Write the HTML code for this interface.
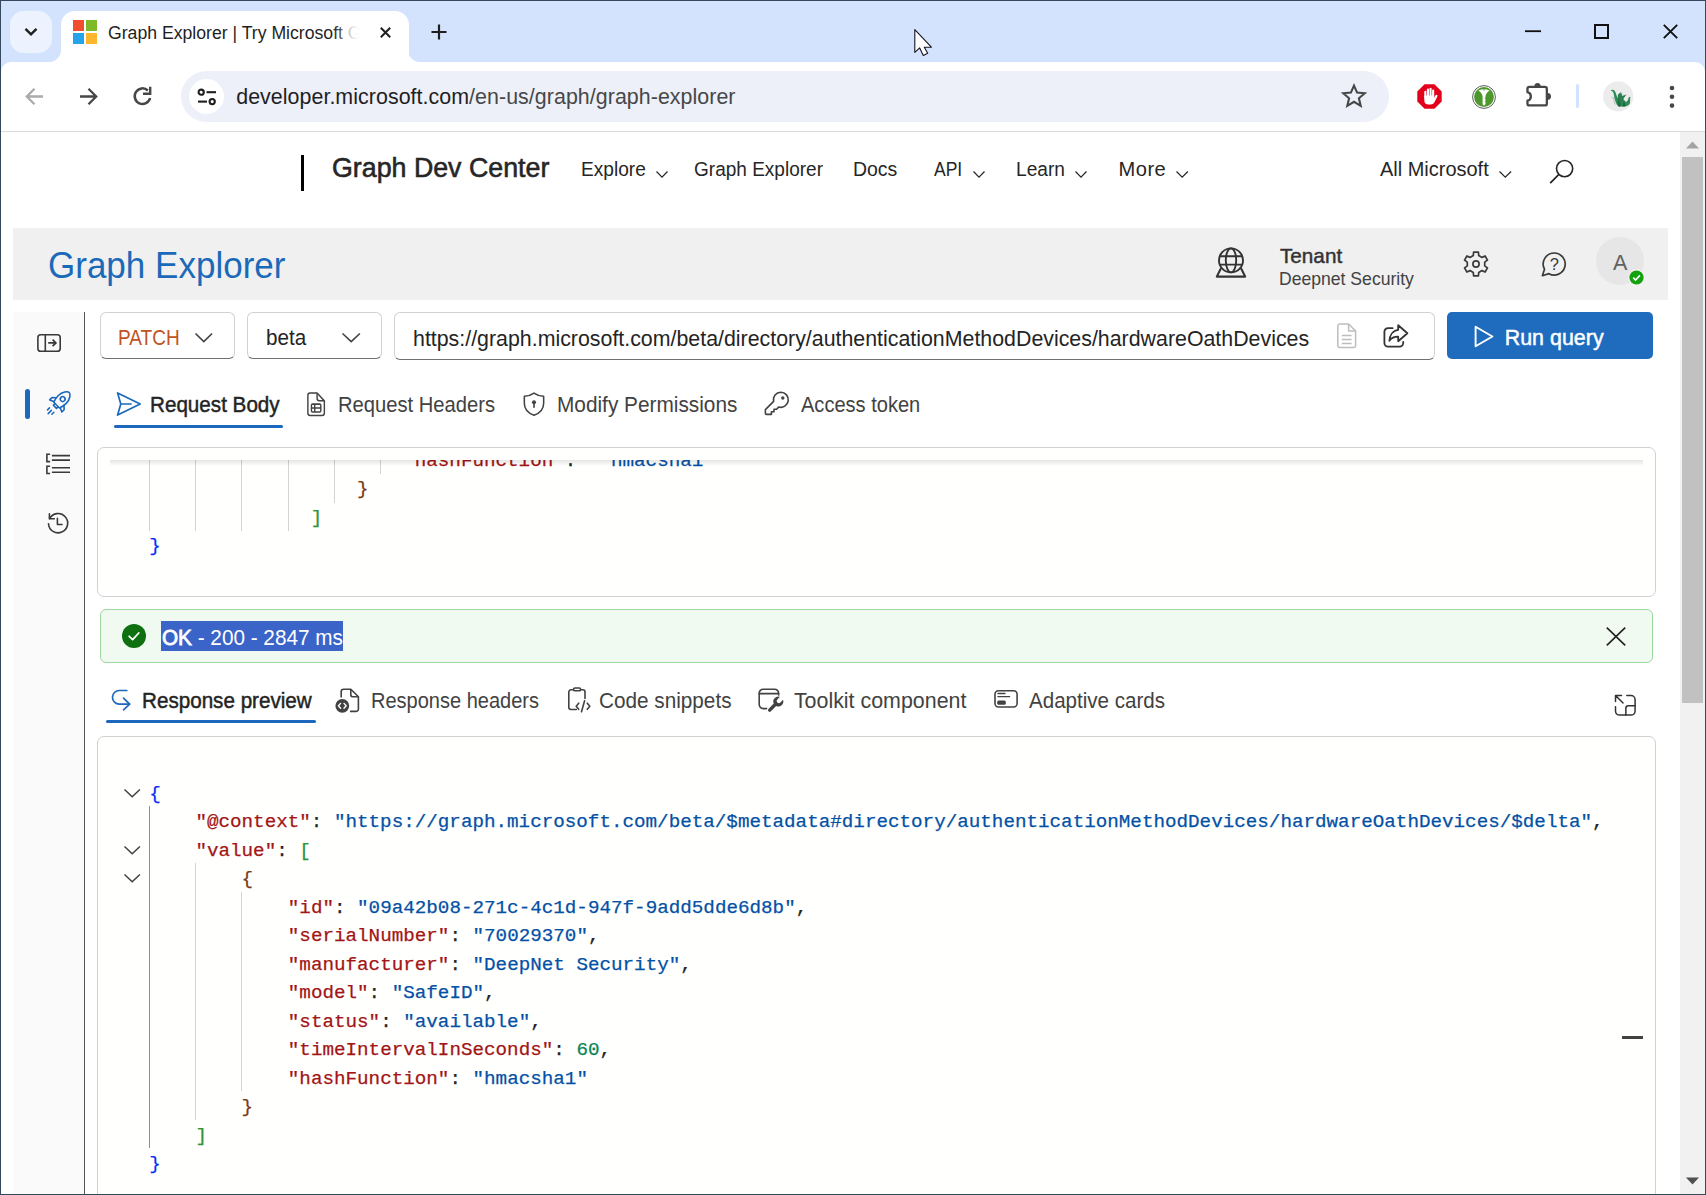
<!DOCTYPE html>
<html lang="en">
<head>
<meta charset="utf-8">
<title>Graph Explorer | Try Microsoft Graph APIs</title>
<style>
*{box-sizing:border-box;margin:0;padding:0}
html,body{width:1706px;height:1195px;overflow:hidden;background:#fff}
body{position:relative;font-family:"Liberation Sans",Arial,sans-serif;color:#242424}
.abs{position:absolute}
.t{position:absolute;white-space:nowrap;line-height:1}
svg{position:absolute;overflow:visible}
/* chrome */
#tabstrip{left:0;top:0;width:1706px;height:90px;background:#d3e3fd}
#tabsearch{left:10px;top:11px;width:42px;height:42px;border-radius:14px;background:#ecf3fe}
#tab{left:61px;top:10.500px;width:347.500px;height:51.500px;background:#fff;border-radius:14px 14px 0 0}
#toolbar{left:1px;top:62px;width:1704px;height:69px;background:#fff;border-radius:10px 10px 0 0}
#omni{left:181px;top:71px;width:1208px;height:51px;border-radius:26px;background:#edf0f9}
#omnichip{left:189px;top:79px;width:35px;height:35px;border-radius:18px;background:#fff}
#sep{left:1px;top:131px;width:1705px;height:1px;background:#dadce0}
/* page */
#page{left:1px;top:132px;width:1681px;height:1062px;background:#fff}
#vscroll{left:1680px;top:132px;width:25px;height:1062px;background:#f1f1f1}
#vthumb{left:1682px;top:157px;width:21px;height:546px;background:#c1c1c1}
#ghead{left:13px;top:228px;width:1655px;height:71.500px;background:#f0f0f0}
#sideline{left:84px;top:298px;width:1px;height:900px;background:#3b3a39}
.box{position:absolute;border:1px solid #8a8886;border-radius:4px;background:#fff}
.mono{font-family:"Liberation Mono","DejaVu Sans Mono",monospace;font-size:19.24px;line-height:28.5px;white-space:pre;position:absolute;-webkit-text-stroke-width:0.25px}
.k{color:#a31515}.s{color:#0451a5}.n{color:#098658}.p{color:#242424}
.b1{color:#0431fa}.b2{color:#319331}.b3{color:#7b3814}
</style>
</head>
<body>
<!-- ===== Browser chrome ===== -->
<div class="abs" id="tabstrip"></div>
<div class="abs" id="tabsearch"></div>
<div class="abs" id="tab"></div>
<div class="abs" id="toolbar"></div>
<div class="abs" id="omni"></div>
<div class="abs" id="omnichip"></div>
<div class="abs" id="sep"></div>

<!-- tab curves -->
<svg style="left:49px;top:50px" width="12" height="12" viewBox="0 0 12 12"><path d="M12 0 V12 H0 A12 12 0 0 0 12 0Z" fill="#fff"/></svg>
<svg style="left:408px;top:50px" width="12" height="12" viewBox="0 0 12 12"><path d="M0 0 V12 H12 A12 12 0 0 1 0 0Z" fill="#fff"/></svg>
<!-- tab search chevron -->
<svg style="left:24px;top:27px" width="14" height="10" viewBox="0 0 14 10"><path d="M1.5 1.8 L7 7.3 L12.5 1.8" fill="none" stroke="#1f1f1f" stroke-width="2.4"/></svg>
<!-- favicon -->
<div class="abs" style="left:73px;top:20px;width:11px;height:11px;background:#f04e2d"></div>
<div class="abs" style="left:86px;top:20px;width:11px;height:11px;background:#7eb928"></div>
<div class="abs" style="left:73px;top:33px;width:11px;height:11px;background:#26a4ea"></div>
<div class="abs" style="left:86px;top:33px;width:11px;height:11px;background:#fdb72e"></div>
<div class="t" style="left:108.4px;top:24.1px;font-size:18.3px;transform:scaleX(0.9650);transform-origin:0 0;color:#1f1f1f;width:266px;height:26px;overflow:hidden;line-height:1">Graph Explorer | Try Microsoft Graph APIs</div>
<div class="abs" style="left:340px;top:18px;width:23px;height:30px;background:linear-gradient(90deg,rgba(255,255,255,0),#fff 90%)"></div>
<div class="abs" style="left:362px;top:18px;width:14px;height:30px;background:#fff"></div>
<div class="abs" style="left:333px;top:18px;width:30px;height:30px;background:linear-gradient(90deg,rgba(255,255,255,0),#fff)"></div>
<!-- tab close -->
<svg style="left:379.5px;top:26.5px" width="11" height="11" viewBox="0 0 11 11"><path d="M0.800 0.800 L10.200 10.200 M10.200 0.800 L0.800 10.200" stroke="#1f1f1f" stroke-width="2" fill="none"/></svg>
<!-- new tab -->
<svg style="left:431px;top:24px" width="16" height="16" viewBox="0 0 16 16"><path d="M8 0.5 V15.5 M0.5 8 H15.5" stroke="#1f1f1f" stroke-width="2.2" fill="none"/></svg>
<!-- window controls -->
<svg style="left:1525px;top:30px" width="16" height="3" viewBox="0 0 16 3"><path d="M0 1.2 H16" stroke="#111" stroke-width="1.8"/></svg>
<svg style="left:1594px;top:24px" width="15" height="15" viewBox="0 0 15 15"><rect x="1" y="1" width="13" height="13" fill="none" stroke="#111" stroke-width="2"/></svg>
<svg style="left:1663px;top:24px" width="15" height="15" viewBox="0 0 15 15"><path d="M0.8 0.8 L14.2 14.2 M14.2 0.8 L0.8 14.2" stroke="#111" stroke-width="1.9" fill="none"/></svg>
<!-- mouse cursor -->
<svg style="left:914px;top:28px" width="20" height="30" viewBox="0 0 20 30"><path d="M0.800 1.600 V24.400 L5.700 19.900 L9.300 27.400 L13.700 25.300 L10.300 19.200 H17.400 Z" fill="#fff" stroke="#15151f" stroke-width="1.100" stroke-linejoin="round"/></svg>
<!-- nav arrows -->
<svg style="left:25px;top:87px" width="19" height="19" viewBox="0 0 19 19"><path d="M18 9.500 H2.500 M9.500 1.800 L1.800 9.500 L9.500 17.200" fill="none" stroke="#ababab" stroke-width="2.300"/></svg>
<svg style="left:79px;top:87px" width="19" height="19" viewBox="0 0 19 19"><path d="M1 9.500 H16.500 M9.500 1.800 L17.200 9.500 L9.500 17.200" fill="none" stroke="#474747" stroke-width="2.300"/></svg>
<svg style="left:132px;top:86px" width="21" height="21" viewBox="0 0 21 21"><path d="M18.100 12 A7.800 7.800 0 1 1 15.900 4.500" fill="none" stroke="#474747" stroke-width="2.500"/><path d="M18.200 0.800 V7.800 H11" fill="none" stroke="#474747" stroke-width="2.400"/></svg>
<!-- tune icon -->
<svg style="left:196.500px;top:87.500px" width="20" height="18" viewBox="0 0 20 18"><g fill="none" stroke="#1f1f1f" stroke-width="2.1"><circle cx="4.2" cy="4.2" r="2.6"/><path d="M9.5 4.2 H19"/><circle cx="15.2" cy="13.6" r="2.6"/><path d="M1 13.6 H10"/></g></svg>
<div class="t" style="left:236.2px;top:86.5px;font-size:21.4px;letter-spacing:0.047px;color:#1f1f1f">developer.microsoft.com<span style="color:#474747">/en-us/graph/graph-explorer</span></div>
<!-- star -->
<svg style="left:1341px;top:83px" width="26" height="25" viewBox="0 0 26 25"><path d="M13 2.6 L16.1 9.6 L23.7 10.3 L17.9 15.3 L19.7 22.8 L13 18.8 L6.3 22.8 L8.1 15.3 L2.3 10.3 L9.9 9.600 Z" fill="none" stroke="#474747" stroke-width="2.1" stroke-linejoin="miter"/></svg>
<!-- adblock -->
<svg style="left:1417px;top:84px" width="25" height="25" viewBox="0 0 25 25"><path d="M7.600 0.300 H17.400 L24.700 7.600 V17.400 L17.400 24.700 H7.600 L0.300 17.400 V7.600 Z" fill="#e2001a"/><g fill="#fff"><rect x="7.300" y="6.800" width="2.100" height="8" rx="1.050"/><rect x="9.900" y="4.500" width="2.100" height="10" rx="1.050"/><rect x="12.500" y="3.700" width="2.100" height="10" rx="1.050"/><rect x="15.100" y="5.400" width="2.100" height="9" rx="1.050"/><path d="M7.300 11.600 H17.200 V14 L18.400 11.600 Q19.300 10.200 20.200 11 Q20.800 11.600 20.200 12.800 L17.600 18 Q16.400 20.500 13.600 20.500 H11.600 Q7.300 20.500 7.300 16.200 Z"/></g></svg>
<!-- keepass-like -->
<svg style="left:1471.500px;top:84.500px" width="24" height="24" viewBox="0 0 24 24"><circle cx="12" cy="12" r="11.400" fill="#fff" stroke="#4a4a4a" stroke-width="0.900"/><circle cx="12" cy="12" r="9.900" fill="#4c982a"/><path d="M6.300 5.600 Q9.400 4 12 4 Q14.600 4 17.700 5.600 Q13.800 8.200 13.500 11.400 L13.500 12.600 L12.600 13.300 L13.500 14 L13.500 15.400 L12.600 16.100 L13.500 16.800 L13.500 19.200 L12 20.800 L10.600 19.200 L10.600 11.400 Q10.200 8.200 6.300 5.600 Z" fill="#fff"/><path d="M10.600 4.600 Q12 6.400 13.400 4.600 Z" fill="#3f8c2a"/></svg>
<!-- extensions puzzle -->
<svg style="left:1525px;top:82px" width="28" height="26" viewBox="0 0 28 26"><path d="M4.500 4.950 H19.800 A2.050 2.050 0 0 1 21.850 7 V21.400 A2.050 2.050 0 0 1 19.800 23.450 H4.500 A2.050 2.050 0 0 1 2.450 21.400 V18.600 A4.300 4.300 0 0 0 2.450 10.200 V7 A2.050 2.050 0 0 1 4.500 4.950 Z" fill="none" stroke="#474747" stroke-width="2.3" stroke-linejoin="round"/><path d="M9.300 4.600 A3.200 3.600 0 0 1 15.700 4.600 Z" fill="#474747"/><path d="M22.400 11 A3.600 3.400 0 0 1 22.400 17.800 Z" fill="#474747"/></svg>
<div class="abs" style="left:1576px;top:84px;width:3px;height:24px;background:#d3e3fd;border-radius:2px"></div>
<!-- profile avatar -->
<svg style="left:1603px;top:80.500px" width="31" height="31" viewBox="0 0 31 31"><circle cx="15.200" cy="15.400" r="15.100" fill="#ececec"/><path d="M7.800 9.800 L9 8.700 Q11.800 8.300 12.600 11.400 Q13.600 16 16.400 19.400 L14.400 25 L12.600 21 Q11.200 17 10.600 12.200 Q10.200 10.200 7.800 9.800 Z" fill="#2f8c57"/><path d="M15 13.600 L18.400 10.800 L17.600 13 L19.200 12.200 L18.800 15 L23.400 13.600 L20.600 17.400 L19.800 25.400 L15.400 25.400 L14 22 Z" fill="#2a8050"/><path d="M20 18 L23 21 L25 19 L25.600 16.400 L27.200 15.600 L27 22 Q26 25 22 25.400 L19 25.400 Z" fill="#2f8c57"/><path d="M15.600 16 L17.400 25.400 L15.400 25.400 Z M21 19 L22.400 25.200 L19.800 25.400 Z" fill="#1a6238"/><path d="M8.400 16.400 L10.600 16.800 L11.600 22.600 L13 23.200" fill="none" stroke="#b5bcb8" stroke-width="0.900"/></svg>
<!-- menu dots -->
<svg style="left:1669px;top:85px" width="6" height="24" viewBox="0 0 6 24"><circle cx="3" cy="3" r="2.3" fill="#474747"/><circle cx="3" cy="11.8" r="2.3" fill="#474747"/><circle cx="3" cy="20.6" r="2.3" fill="#474747"/></svg>

<!-- ===== Page ===== -->
<div class="abs" id="page"></div>
<div class="abs" id="vscroll"></div>
<div class="abs" id="vthumb"></div>
<div class="abs" style="left:301px;top:155px;width:3px;height:36px;background:#000"></div>
<div class="t" style="left:332.4px;top:154.0px;font-size:27.5px;transform:scaleX(0.9739);transform-origin:0 0;color:#262626;-webkit-text-stroke-width:0.58px">Graph Dev Center</div>
<div class="t" style="left:580.5px;top:158.8px;font-size:20.1px;transform:scaleX(0.9508);transform-origin:0 0;color:#262626">Explore</div>
<div class="t" style="left:693.7px;top:158.8px;font-size:20.1px;transform:scaleX(0.9467);transform-origin:0 0;color:#262626">Graph Explorer</div>
<div class="t" style="left:852.5px;top:158.8px;font-size:20.1px;transform:scaleX(0.9674);transform-origin:0 0;color:#262626">Docs</div>
<div class="t" style="left:934.1px;top:158.8px;font-size:20.1px;transform:scaleX(0.8710);transform-origin:0 0;color:#262626">API</div>
<div class="t" style="left:1016.4px;top:158.8px;font-size:20.1px;transform:scaleX(0.9521);transform-origin:0 0;color:#262626">Learn</div>
<div class="t" style="left:1118.5px;top:158.8px;font-size:20.1px;letter-spacing:0.500px;color:#262626">More</div>
<div class="t" style="left:1380.0px;top:158.8px;font-size:20.1px;transform:scaleX(0.9936);transform-origin:0 0;color:#262626">All Microsoft</div>
<svg style="left:655.5px;top:171.3px" width="12.0" height="6.9" viewBox="0 0 12.0 6.9"><path d="M0.5 0.5 L6.00 6.10 L11.50 0.5" fill="none" stroke="#262626" stroke-width="1.25"/></svg>
<svg style="left:973px;top:171.3px" width="12.0" height="6.9" viewBox="0 0 12.0 6.9"><path d="M0.5 0.5 L6.00 6.10 L11.50 0.5" fill="none" stroke="#262626" stroke-width="1.25"/></svg>
<svg style="left:1075px;top:171.3px" width="12.0" height="6.9" viewBox="0 0 12.0 6.9"><path d="M0.5 0.5 L6.00 6.10 L11.50 0.5" fill="none" stroke="#262626" stroke-width="1.25"/></svg>
<svg style="left:1176px;top:171.3px" width="12.4" height="6.9" viewBox="0 0 12.4 6.9"><path d="M0.5 0.5 L6.20 6.10 L11.90 0.5" fill="none" stroke="#262626" stroke-width="1.25"/></svg>
<svg style="left:1499px;top:171.3px" width="12.6" height="6.9" viewBox="0 0 12.6 6.9"><path d="M0.5 0.5 L6.30 6.10 L12.10 0.5" fill="none" stroke="#262626" stroke-width="1.25"/></svg>
<svg style="left:1549px;top:159px" width="26" height="26" viewBox="0 0 26 26"><circle cx="15.6" cy="9.6" r="8.1" fill="none" stroke="#262626" stroke-width="1.6"/><path d="M9.9 15.300 L1.2 24.200" stroke="#262626" stroke-width="1.7" fill="none"/></svg>
<div class="abs" id="ghead"></div>
<div class="t" style="left:48.0px;top:248.4px;font-size:36.6px;transform:scaleX(0.9573);transform-origin:0 0;color:#1b6ab9">Graph Explorer</div>
<div class="t" style="left:1280.0px;top:245.8px;font-size:20.8px;transform:scaleX(0.9952);transform-origin:0 0;color:#333;-webkit-text-stroke-width:0.44px">Tenant</div>
<div class="t" style="left:1279.0px;top:269.9px;font-size:18.2px;transform:scaleX(0.9669);transform-origin:0 0;color:#424242">Deepnet Security</div>
<svg style="left:1215px;top:247px" width="32" height="32" viewBox="0 0 32 32"><g fill="none" stroke="#333" stroke-width="1.9"><circle cx="16" cy="13.400" r="12"/><ellipse cx="16" cy="13.400" rx="5.200" ry="12"/><path d="M4.800 9.200 H27.200 M4.800 17.600 H27.200"/><path d="M5.600 22 L1.800 29.600 H30.200 L26.400 22" stroke-width="2.100" stroke-linejoin="round" stroke-linecap="round"/></g></svg>
<svg style="left:1462px;top:250px" width="28" height="28" viewBox="0 0 28 28"><path d="M11.25 5.54 L11.61 2.14 L16.39 2.14 L16.75 5.54 L19.96 7.39 L23.08 6.00 L25.47 10.14 L22.71 12.15 L22.71 15.85 L25.47 17.86 L23.08 22.00 L19.96 20.61 L16.75 22.46 L16.39 25.86 L11.61 25.86 L11.25 22.46 L8.04 20.61 L4.92 22.00 L2.53 17.86 L5.29 15.85 L5.29 12.15 L2.53 10.14 L4.92 6.00 L8.04 7.39 Z" fill="none" stroke="#3a3a3a" stroke-width="1.7" stroke-linejoin="round"/><circle cx="14" cy="14" r="3.1" fill="none" stroke="#3a3a3a" stroke-width="1.7"/></svg>
<svg style="left:1540px;top:251px" width="28" height="27" viewBox="0 0 28 27"><path d="M14.200 2 A11 11 0 1 1 8.900 22.640 L2.400 24.700 L4.500 18.200 A11 11 0 0 1 14.200 2 Z" fill="none" stroke="#3a3a3a" stroke-width="1.700" stroke-linejoin="round"/></svg>
<div class="t" style="left:1549.700px;top:256px;font-size:16.500px;color:#3a3a3a">?</div>
<div class="abs" style="left:1596px;top:237px;width:48px;height:48px;border-radius:24px;background:#e6e6e6"></div>
<div class="t" style="left:1612.9px;top:251.5px;font-size:21.6px;letter-spacing:0.100px;color:#616161">A</div>
<svg style="left:1628px;top:269px" width="17" height="17" viewBox="0 0 17 17"><circle cx="8.5" cy="8.5" r="8.5" fill="#f0f0f0"/><circle cx="8.5" cy="8.500" r="7.1" fill="#13a10e"/><path d="M5.200 8.700 L7.500 11 L11.900 6.400" fill="none" stroke="#fff" stroke-width="1.7"/></svg>
<div class="abs" style="left:13px;top:312px;width:71px;height:882px;background:#fafafa"></div>
<div class="abs" style="left:84px;top:312px;width:1px;height:882px;background:#555"></div>
<svg style="left:37px;top:334px" width="24" height="18" viewBox="0 0 24 18"><g fill="none" stroke="#3a3a3a" stroke-width="1.600"><rect x="0.900" y="0.800" width="22.300" height="16.400" rx="2.800"/><path d="M8.300 0.800 V17.200"/><path d="M11.200 8.900 H18.600 M15.600 5.600 L18.900 8.900 L15.600 12.200" stroke-width="1.700"/></g></svg>
<div class="abs" style="left:25px;top:389px;width:5px;height:30px;border-radius:3px;background:#1b68bd"></div>
<svg style="left:0px;top:0px" width="100" height="430" viewBox="0 0 100 430"><g transform="translate(62 399.750) rotate(45)" fill="none" stroke="#1b68bd" stroke-width="1.600" stroke-linejoin="round" stroke-linecap="round"><path d="M0 -10.200 C2 -10.200 5.600 -6.200 5.600 -0.400 C5.600 3 5 5.400 4 7.600 H-4 C-5 5.400 -5.600 3 -5.600 -0.400 C-5.600 -6.200 -2 -10.200 0 -10.200 Z"/><circle cx="0" cy="-1" r="2.400"/><path d="M-5.400 2.600 L-8.600 5.600 V8.800 L-4.600 7"/><path d="M5.400 2.600 L8.600 5.600 V8.800 L4.600 7"/><path d="M-2.200 7.800 V10 H2.200 V7.800"/><path d="M-3.100 14.600 V17.400 M0 15 V19.600 M3.100 14.600 V17.400" stroke-width="1.500"/></g></svg>
<svg style="left:46px;top:453px" width="24" height="22" viewBox="0 0 24 22"><g fill="none" stroke="#3a3a3a" stroke-width="1.600"><path d="M5.900 2.600 H24 M5.900 7.100 H24 M5.900 14.800 H24 M5.900 19.200 H24"/><path d="M4.100 1.200 H0.900 V8.600 H4.100 M4.100 13.300 H0.900 V20.500 H4.100"/></g></svg>
<svg style="left:46px;top:511px" width="24" height="24" viewBox="0 0 24 24"><g fill="none" stroke="#3a3a3a" stroke-width="1.600" stroke-linecap="round" stroke-linejoin="round"><path d="M3.600 7.700 A9.600 9.600 0 1 1 2.500 12.700"/><path d="M3.400 2.800 V7.700 H8.300"/><path d="M11.400 7.400 V13.500 H16"/></g></svg>
<div class="abs" style="left:100px;top:312px;width:135px;height:47px;border:1px solid #d1d1d1;border-bottom-color:#707070;border-radius:6px;background:#fff"></div>
<div class="abs" style="left:247px;top:312px;width:135px;height:47px;border:1px solid #d1d1d1;border-bottom-color:#707070;border-radius:6px;background:#fff"></div>
<div class="abs" style="left:394px;top:312px;width:1041px;height:48px;border:1px solid #d1d1d1;border-bottom-color:#707070;border-radius:6px;background:#fff"></div>
<div class="t" style="left:117.9px;top:328.0px;font-size:21.4px;transform:scaleX(0.8909);transform-origin:0 0;color:#c2531f">PATCH</div>
<div class="t" style="left:265.7px;top:328.0px;font-size:21.4px;transform:scaleX(0.9659);transform-origin:0 0;color:#242424">beta</div>
<div class="t" style="left:412.5px;top:328.7px;font-size:21.4px;transform:scaleX(0.9983);transform-origin:0 0;color:#242424">https://graph.microsoft.com/beta/directory/authenticationMethodDevices/hardwareOathDevices</div>
<svg style="left:195.4px;top:332.6px" width="17.6" height="9.4" viewBox="0 0 17.6 9.4"><path d="M0.5 0.5 L8.80 8.60 L17.10 0.5" fill="none" stroke="#424242" stroke-width="1.6"/></svg>
<svg style="left:341.6px;top:332.6px" width="18.4" height="9.4" viewBox="0 0 18.4 9.4"><path d="M0.5 0.5 L9.20 8.60 L17.90 0.5" fill="none" stroke="#424242" stroke-width="1.6"/></svg>
<svg style="left:1337px;top:323px" width="20" height="26" viewBox="0 0 20 26"><g fill="none" stroke="#bdbdbd" stroke-width="1.500" stroke-linejoin="round"><path d="M2.800 1 H11.600 L18.600 8 V22.600 A2 2 0 0 1 16.600 24.600 H2.800 A2 2 0 0 1 0.800 22.600 V3 A2 2 0 0 1 2.800 1 Z"/><path d="M11.600 1 V8 H18.600"/><path d="M4.800 12.600 H14.600 M4.800 16.600 H14.600 M4.800 20.600 H14.600"/></g></svg>
<svg style="left:1383px;top:324px" width="26" height="24" viewBox="0 0 26 24"><g fill="none" stroke="#333" stroke-width="1.800" stroke-linejoin="round" stroke-linecap="round"><path d="M9.600 4.200 H5 A3.600 3.600 0 0 0 1.400 7.800 V19 A3.600 3.600 0 0 0 5 22.600 H16.600 A3.600 3.600 0 0 0 20.200 19 V17.800"/><path d="M15.200 1.200 L24.400 9.200 L15.200 17.200 V12.700 C10.800 12.600 8.400 14 6.400 16.800 C6.800 11.200 9.800 6.400 15.200 5.800 Z"/></g></svg>
<div class="abs" style="left:1447px;top:312px;width:206px;height:47px;border-radius:5px;background:#1f6cbf"></div>
<svg style="left:1474px;top:325px" width="20" height="23" viewBox="0 0 20 23"><path d="M1.600 1.800 L18.400 11.500 L1.600 21.200 Z" fill="none" stroke="#fff" stroke-width="1.900" stroke-linejoin="round"/></svg>
<div class="t" style="left:1504.7px;top:328.0px;font-size:21.4px;letter-spacing:0.025px;color:#fff;-webkit-text-stroke-width:0.45px">Run query</div>
<div class="t" style="left:149.5px;top:395.2px;font-size:21.4px;transform:scaleX(0.9649);transform-origin:0 0;color:#242424;-webkit-text-stroke-width:0.45px">Request Body</div>
<div class="t" style="left:338.4px;top:395.2px;font-size:21.4px;transform:scaleX(0.9433);transform-origin:0 0;color:#424242">Request Headers</div>
<div class="t" style="left:557.1px;top:395.2px;font-size:21.4px;transform:scaleX(0.9727);transform-origin:0 0;color:#424242">Modify Permissions</div>
<div class="t" style="left:800.6px;top:395.2px;font-size:21.4px;transform:scaleX(0.9373);transform-origin:0 0;color:#424242">Access token</div>
<div class="abs" style="left:114px;top:425px;width:169px;height:3px;border-radius:2px;background:#1b68bd"></div>
<svg style="left:116px;top:392px" width="26" height="24" viewBox="0 0 26 24"><path d="M1.600 0.900 L24.200 12 L1.600 23.100 L4.800 12 Z M4.800 12 H15" fill="none" stroke="#1b68bd" stroke-width="1.700" stroke-linejoin="round" stroke-linecap="round"/></svg>
<svg style="left:306.900px;top:391.700px" width="18.600" height="25" viewBox="0 0 21 26" preserveAspectRatio="none"><g fill="none" stroke="#424242" stroke-width="1.600" stroke-linejoin="round"><path d="M3.600 1 H11.400 L19.600 9.200 V21.800 A2.600 2.600 0 0 1 17 24.400 H3.600 A2.600 2.600 0 0 1 1 21.800 V3.600 A2.600 2.600 0 0 1 3.600 1 Z"/><path d="M11.400 1 V6.600 A2.600 2.600 0 0 0 14 9.200 H19.600"/><rect x="5" y="12.600" width="10.600" height="8.200" rx="1.300"/><path d="M5 16.700 H15.600 M8.700 12.600 V20.800"/></g></svg>
<svg style="left:523px;top:391.800px" width="22" height="24.400" viewBox="0 0 23 26" preserveAspectRatio="none"><g fill="none" stroke="#424242" stroke-width="1.600" stroke-linejoin="round"><path d="M11.500 1.200 C14.500 3.400 17.800 4.400 21.600 4.600 V12 C21.600 18.600 17.500 22.600 11.500 24.800 C5.500 22.600 1.400 18.600 1.400 12 V4.600 C5.200 4.400 8.500 3.400 11.500 1.200 Z"/></g><circle cx="11.500" cy="11" r="2.100" fill="#424242"/><path d="M11.500 12 V16.200" stroke="#424242" stroke-width="1.700" stroke-linecap="round"/></svg>
<svg style="left:764px;top:391.300px" width="26" height="25" viewBox="0 0 26 25"><g fill="none" stroke="#424242" stroke-width="1.600" stroke-linejoin="round" stroke-linecap="round"><path d="M16.800 1.200 A7.600 7.600 0 1 1 14.600 16.100 L12.600 18.200 H10 V20.800 H7.400 V23.400 H2.400 A1 1 0 0 1 1.400 22.400 V18.600 L9.600 10.400 A7.600 7.600 0 0 1 16.800 1.200 Z"/></g><circle cx="18.800" cy="7" r="1.700" fill="#424242"/></svg>
<div class="abs" style="left:97px;top:447px;width:1559px;height:150px;border:1px solid #d1d1d1;border-radius:7px;background:#fffffe"></div>
<div class="abs" style="left:108px;top:460px;width:1536px;height:120px;overflow:hidden">
<div class="mono" style="left:295.2px;top:-13.38px"><span class="k">"hashFunction"</span><span class="p">:  </span><span class="s">"hmacsha1"</span></div>
<div class="mono" style="left:249.0px;top:15.12px"><span class="b3">}</span></div>
<div class="mono" style="left:202.8px;top:43.62px"><span class="b2">]</span></div>
<div class="mono" style="left:41.2px;top:72.12px"><span class="b1">}</span></div>
<div class="abs" style="left:41.0px;top:-2px;width:1px;height:73.0px;background:#d3d3d3"></div>
<div class="abs" style="left:87.2px;top:-2px;width:1px;height:73.0px;background:#d3d3d3"></div>
<div class="abs" style="left:133.4px;top:-2px;width:1px;height:73.0px;background:#d3d3d3"></div>
<div class="abs" style="left:179.5px;top:-2px;width:1px;height:73.0px;background:#d3d3d3"></div>
<div class="abs" style="left:225.7px;top:-2px;width:1px;height:44.5px;background:#d3d3d3"></div>
<div class="abs" style="left:271.9px;top:-2px;width:1px;height:16.0px;background:#d3d3d3"></div>
<div class="abs" style="left:2px;top:0;width:1533px;height:6px;background:linear-gradient(180deg,rgba(0,0,0,0.10),rgba(0,0,0,0))"></div>
</div>
<div class="abs" style="left:100px;top:609px;width:1553px;height:54px;border:1px solid #9fd89f;border-radius:6px;background:#f1faf1"></div>
<svg style="left:122px;top:624px" width="24" height="24" viewBox="0 0 24 24"><circle cx="12" cy="12" r="12" fill="#0e700e"/><path d="M7.200 12.300 L10.600 15.600 L16.800 9" fill="none" stroke="#fff" stroke-width="1.800" stroke-linecap="round" stroke-linejoin="round"/></svg>
<div class="abs" style="left:161px;top:621px;width:182px;height:29.500px;background:#3b64c8"></div>
<div class="t" style="left:161.8px;top:627.9px;font-size:21.4px;transform:scaleX(0.9688);transform-origin:0 0;color:#fff"><span style="-webkit-text-stroke-width:0.8px">OK</span> - 200 - 2847 ms</div>
<svg style="left:1606px;top:627px" width="20" height="19" viewBox="0 0 20 19"><path d="M0.800 0.600 L19.200 18.400 M19.200 0.600 L0.800 18.400" stroke="#242424" stroke-width="1.700" fill="none"/></svg>
<div class="t" style="left:142.0px;top:690.6px;font-size:21.4px;transform:scaleX(0.9646);transform-origin:0 0;color:#242424;-webkit-text-stroke-width:0.45px">Response preview</div>
<div class="t" style="left:371.1px;top:690.6px;font-size:21.4px;transform:scaleX(0.9356);transform-origin:0 0;color:#424242">Response headers</div>
<div class="t" style="left:599.0px;top:690.6px;font-size:21.4px;transform:scaleX(0.9689);transform-origin:0 0;color:#424242">Code snippets</div>
<div class="t" style="left:793.9px;top:690.6px;font-size:21.4px;letter-spacing:0.006px;color:#424242">Toolkit component</div>
<div class="t" style="left:1029.0px;top:690.6px;font-size:21.4px;transform:scaleX(0.9617);transform-origin:0 0;color:#424242">Adaptive cards</div>
<div class="abs" style="left:106px;top:720px;width:210px;height:3px;border-radius:2px;background:#1b68bd"></div>
<svg style="left:111px;top:689px" width="21" height="23" viewBox="0 0 21 23"><g fill="none" stroke="#1b68bd" stroke-width="1.700" stroke-linecap="round" stroke-linejoin="round"><path d="M15.800 1.500 H8.300 A6.850 6.850 0 0 0 8.300 15.200 H18.400"/><path d="M12.500 9.200 L18.700 15.200 L12.500 20.800"/></g></svg>
<svg style="left:334.500px;top:687.500px" width="26" height="26" viewBox="0 0 26 26"><g fill="none" stroke="#424242" stroke-width="1.600" stroke-linejoin="round"><path d="M6.200 9.600 V3.600 A2.400 2.400 0 0 1 8.600 1.200 H15.800 L23.400 8.800 V21 A2.400 2.400 0 0 1 21 23.400 H15"/><path d="M15.800 1.200 V6.400 A2.400 2.400 0 0 0 18.200 8.800 H23.400"/></g><circle cx="7.300" cy="17.800" r="6.900" fill="#424242"/><path d="M5.600 15.400 L3.400 17.800 L5.600 20.200 M9 15.400 L11.200 17.800 L9 20.200" fill="none" stroke="#fff" stroke-width="1.400" stroke-linecap="round" stroke-linejoin="round"/></svg>
<svg style="left:567px;top:687px" width="25" height="26" viewBox="0 0 25 26"><g fill="none" stroke="#424242" stroke-width="1.600" stroke-linejoin="round" stroke-linecap="round"><path d="M6.200 2.800 H4 A2.200 2.200 0 0 0 1.800 5 V20.300 A2.200 2.200 0 0 0 4 22.500 H9.400"/><path d="M14 2.800 H15.800 A2.200 2.200 0 0 1 18 5 V11.400"/><rect x="6.600" y="1" width="7" height="2.800" rx="1.400"/><path d="M11.700 16.200 L9.200 19.250 L11.700 22.300 M20.300 16.200 L22.800 19.250 L20.300 22.300 M17.600 13.800 L14.500 24.800"/></g></svg>
<svg style="left:758px;top:688px" width="28" height="27" viewBox="0 0 28 27"><g fill="none" stroke="#424242" stroke-width="1.600" stroke-linejoin="round" stroke-linecap="round"><path d="M8.600 20.600 H5.200 A4 4 0 0 1 1.200 16.600 V5.200 A4 4 0 0 1 5.200 1.200 H16.600 A4 4 0 0 1 20.600 5.200 V7.600"/><path d="M1.200 5.600 H20.600"/></g><g transform="translate(20.300 13.500) rotate(45)"><path d="M-2.200 -4.500 V-0.800 A2.200 2.200 0 0 0 2.200 -0.800 V-4.500 A5 5 0 0 1 1.700 4.700 V12.200 A1.700 1.700 0 0 1 -1.700 12.200 V4.700 A5 5 0 0 1 -2.200 -4.500 Z" fill="#424242" stroke="#fff" stroke-width="1.800" paint-order="stroke"/></g></svg>
<svg style="left:994px;top:689px" width="25" height="20" viewBox="0 0 25 20"><rect x="1" y="1.800" width="22.100" height="16.200" rx="3.400" fill="none" stroke="#424242" stroke-width="1.600"/><path d="M3.900 4.500 H11 M3.900 7.600 H15.600" stroke="#424242" stroke-width="1.300" stroke-linecap="round"/><rect x="3.200" y="11.600" width="8.600" height="4.200" rx="1.500" fill="#424242"/></svg>
<svg style="left:1613.600px;top:694.400px" width="22.600" height="22.600" viewBox="0 0 24 24"><g fill="none" stroke="#333" stroke-width="1.600" stroke-linecap="round" stroke-linejoin="round"><path d="M13.600 1.600 H18 A4.400 4.400 0 0 1 22.400 6 V18 A4.400 4.400 0 0 1 18 22.400 H6 A4.400 4.400 0 0 1 1.600 18 V13.600"/><path d="M22.400 12.600 H15.200 A2.600 2.600 0 0 0 12.600 15.200 V22.400"/><path d="M1.600 8 V1.600 H8 M1.600 1.600 L9.600 9.600"/></g></svg>
<div class="abs" style="left:97px;top:736px;width:1559px;height:470px;border:1px solid #d1d1d1;border-radius:7px;background:#fffffe"></div>
<div class="mono" style="left:149.2px;top:779.82px"><span class="b1">{</span></div>
<div class="mono" style="left:195.4px;top:808.32px"><span class="k">"@context"</span><span class="p">: </span><span class="s">"https://graph.microsoft.com/beta/$metadata#directory/authenticationMethodDevices/hardwareOathDevices/$delta"</span><span class="p">,</span></div>
<div class="mono" style="left:195.4px;top:836.82px"><span class="k">"value"</span><span class="p">: </span><span class="b2">[</span></div>
<div class="mono" style="left:241.6px;top:865.32px"><span class="b3">{</span></div>
<div class="mono" style="left:287.8px;top:893.82px"><span class="k">"id"</span><span class="p">: </span><span class="s">"09a42b08-271c-4c1d-947f-9add5dde6d8b"</span><span class="p">,</span></div>
<div class="mono" style="left:287.8px;top:922.32px"><span class="k">"serialNumber"</span><span class="p">: </span><span class="s">"70029370"</span><span class="p">,</span></div>
<div class="mono" style="left:287.8px;top:950.82px"><span class="k">"manufacturer"</span><span class="p">: </span><span class="s">"DeepNet Security"</span><span class="p">,</span></div>
<div class="mono" style="left:287.8px;top:979.32px"><span class="k">"model"</span><span class="p">: </span><span class="s">"SafeID"</span><span class="p">,</span></div>
<div class="mono" style="left:287.8px;top:1007.82px"><span class="k">"status"</span><span class="p">: </span><span class="s">"available"</span><span class="p">,</span></div>
<div class="mono" style="left:287.8px;top:1036.32px"><span class="k">"timeIntervalInSeconds"</span><span class="p">: </span><span class="n">60</span><span class="p">,</span></div>
<div class="mono" style="left:287.8px;top:1064.82px"><span class="k">"hashFunction"</span><span class="p">: </span><span class="s">"hmacsha1"</span></div>
<div class="mono" style="left:241.6px;top:1093.32px"><span class="b3">}</span></div>
<div class="mono" style="left:195.4px;top:1121.82px"><span class="b2">]</span></div>
<div class="mono" style="left:149.2px;top:1150.32px"><span class="b1">}</span></div>
<div class="abs" style="left:149px;top:806.0px;width:1px;height:342.0px;background:#8f8f8f"></div>
<div class="abs" style="left:195px;top:863.0px;width:1px;height:256.5px;background:#d3d3d3"></div>
<div class="abs" style="left:241px;top:891.5px;width:1px;height:199.5px;background:#d3d3d3"></div>
<svg style="left:124px;top:788.9000000000001px" width="16.4" height="8.6" viewBox="0 0 16.4 8.6"><path d="M0.5 0.5 L8.20 7.80 L15.90 0.5" fill="none" stroke="#424242" stroke-width="1.5"/></svg>
<svg style="left:124px;top:845.7px" width="16.4" height="8.6" viewBox="0 0 16.4 8.6"><path d="M0.5 0.5 L8.20 7.80 L15.90 0.5" fill="none" stroke="#424242" stroke-width="1.5"/></svg>
<svg style="left:124px;top:874.1px" width="16.4" height="8.6" viewBox="0 0 16.4 8.6"><path d="M0.5 0.5 L8.20 7.80 L15.90 0.5" fill="none" stroke="#424242" stroke-width="1.5"/></svg>
<div class="abs" style="left:1622px;top:1036px;width:21px;height:3px;background:#424242"></div>
<svg style="left:1686px;top:141px" width="13" height="8" viewBox="0 0 13 8"><path d="M0 7.500 L6.500 0.500 L13 7.500 Z" fill="#a3a3a3"/></svg>
<svg style="left:1686px;top:1177px" width="13" height="8" viewBox="0 0 13 8"><path d="M0 0.500 L6.500 7.500 L13 0.500 Z" fill="#505050"/></svg>
<div class="abs" style="left:0;top:0;width:1706px;height:1195px;border:1px solid #35495c;pointer-events:none"></div>
</body>
</html>
